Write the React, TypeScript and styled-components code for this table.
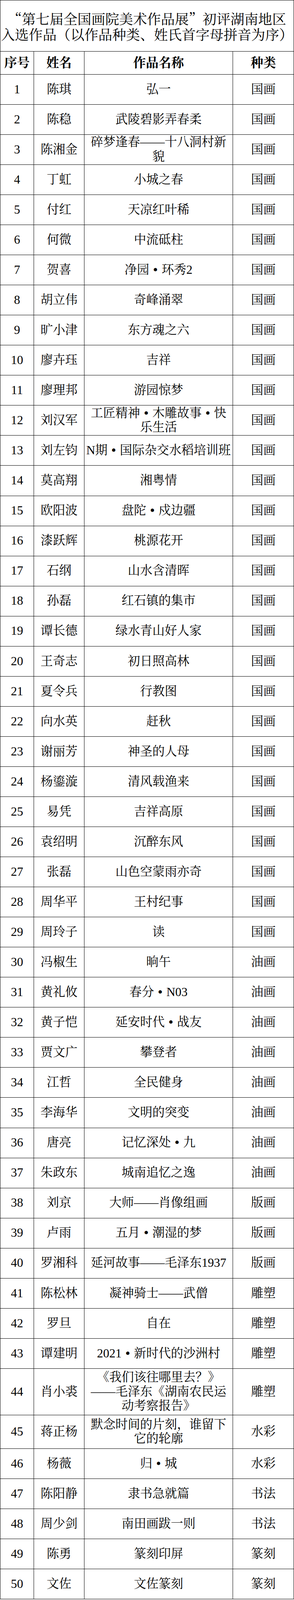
import React from "react";
import styled, { createGlobalStyle } from "styled-components";

// 原表高 4676px，纵向尺寸按窗口高度折算，整张表正好放进一屏
const vy = (px: number) => `calc(100vh * ${px} / 4678)`;

const GlobalStyle = createGlobalStyle`
  html, body {
    margin: 0;
    padding: 0;
    background: #fff;
  }
  body {
    color: #000;
    font-family: "Liberation Serif", "Noto Serif CJK SC", "Noto Sans CJK SC", serif;
  }
`;

const Sheet = styled.div`
  width: 752px;
  box-sizing: border-box;
  border-left: 1px solid #000;
`;

const TitleBox = styled.div`
  height: ${vy(151)};
  box-sizing: border-box;
  border-top: 1px solid #000;
  border-right: 1px solid #000;
  border-bottom: 1px solid #000;
  display: flex;
  align-items: center;
  justify-content: center;
  text-align: center;
  font-family: "Noto Serif CJK SC", "Noto Sans CJK SC", serif;
  font-size: 35.6px;
  line-height: ${vy(46.7)};
  padding-top: ${vy(3)};
`;

const TitleLine = styled.div`
  white-space: nowrap;
`;

const Quote = styled.span<{ $open?: boolean }>`
  display: inline-block;
  width: 1em;
  text-align: ${(p) => (p.$open ? "right" : "left")};
`;

const Row = styled.div<{ $h: number }>`
  display: grid;
  grid-template-columns: 86px 129px 380px 156px;
  height: ${(p) => vy(p.$h)};
`;

const Cell = styled.div<{ $head?: boolean }>`
  box-sizing: border-box;
  border-right: 1px solid #000;
  border-bottom: 1px solid #000;
  display: flex;
  flex-direction: column;
  align-items: center;
  justify-content: center;
  text-align: center;
  padding: 0 2px;
  font-size: ${(p) => (p.$head ? "32.5px" : "31.5px")};
  font-weight: ${(p) => (p.$head ? 700 : 400)};
  line-height: ${vy(41.7)};
`;

const WorkLine = styled.span`
  display: block;
  white-space: nowrap;
`;

const Dot = styled.span`
  display: inline-block;
  width: 31.5px;
  text-align: center;
  font-family: "Liberation Serif", serif;
  font-weight: 700;
`;

type Entry = {
  no: number;
  name: string;
  work: string;
  kind: string;
  h?: number;
};

const entries: Entry[] = [
  { no: 1, name: "陈琪", work: "弘一", kind: "国画" },
  { no: 2, name: "陈稳", work: "武陵碧影弄春柔", kind: "国画" },
  { no: 3, name: "陈湘金", work: "碎梦逢春——十八洞村新\n貌", kind: "国画" },
  { no: 4, name: "丁虹", work: "小城之春", kind: "国画" },
  { no: 5, name: "付红", work: "天凉红叶稀", kind: "国画" },
  { no: 6, name: "何微", work: "中流砥柱", kind: "国画" },
  { no: 7, name: "贺喜", work: "净园·环秀2", kind: "国画" },
  { no: 8, name: "胡立伟", work: "奇峰涌翠", kind: "国画" },
  { no: 9, name: "旷小津", work: "东方魂之六", kind: "国画" },
  { no: 10, name: "廖卉珏", work: "吉祥", kind: "国画" },
  { no: 11, name: "廖理邦", work: "游园惊梦", kind: "国画" },
  { no: 12, name: "刘汉军", work: "工匠精神·木雕故事·快\n乐生活", kind: "国画" },
  { no: 13, name: "刘左钧", work: "N期·国际杂交水稻培训班", kind: "国画" },
  { no: 14, name: "莫高翔", work: "湘粤情", kind: "国画" },
  { no: 15, name: "欧阳波", work: "盘陀·戍边疆", kind: "国画" },
  { no: 16, name: "漆跃辉", work: "桃源花开", kind: "国画" },
  { no: 17, name: "石纲", work: "山水含清晖", kind: "国画" },
  { no: 18, name: "孙磊", work: "红石镇的集市", kind: "国画" },
  { no: 19, name: "谭长德", work: "绿水青山好人家", kind: "国画" },
  { no: 20, name: "王奇志", work: "初日照高林", kind: "国画" },
  { no: 21, name: "夏令兵", work: "行教图", kind: "国画" },
  { no: 22, name: "向水英", work: "赶秋", kind: "国画" },
  { no: 23, name: "谢丽芳", work: "神圣的人母", kind: "国画" },
  { no: 24, name: "杨鎏漩", work: "清风载渔来", kind: "国画" },
  { no: 25, name: "易凭", work: "吉祥高原", kind: "国画" },
  { no: 26, name: "袁绍明", work: "沉醉东风", kind: "国画" },
  { no: 27, name: "张磊", work: "山色空蒙雨亦奇", kind: "国画" },
  { no: 28, name: "周华平", work: "王村纪事", kind: "国画" },
  { no: 29, name: "周玲子", work: "读", kind: "国画" },
  { no: 30, name: "冯椒生", work: "晌午", kind: "油画" },
  { no: 31, name: "黄礼攸", work: "春分·N03", kind: "油画" },
  { no: 32, name: "黄子恺", work: "延安时代·战友", kind: "油画" },
  { no: 33, name: "贾文广", work: "攀登者", kind: "油画" },
  { no: 34, name: "江哲", work: "全民健身", kind: "油画" },
  { no: 35, name: "李海华", work: "文明的突变", kind: "油画" },
  { no: 36, name: "唐亮", work: "记忆深处·九", kind: "油画" },
  { no: 37, name: "朱政东", work: "城南追忆之逸", kind: "油画" },
  { no: 38, name: "刘京", work: "大师——肖像组画", kind: "版画" },
  { no: 39, name: "卢雨", work: "五月·潮湿的梦", kind: "版画" },
  { no: 40, name: "罗湘科", work: "延河故事——毛泽东1937", kind: "版画" },
  { no: 41, name: "陈松林", work: "凝神骑士——武僧", kind: "雕塑" },
  { no: 42, name: "罗旦", work: "自在", kind: "雕塑" },
  { no: 43, name: "谭建明", work: "2021·新时代的沙洲村", kind: "雕塑" },
  {
    no: 44,
    name: "肖小裘",
    work: "《我们该往哪里去？》\n——毛泽东《湖南农民运\n动考察报告》",
    kind: "雕塑",
    h: 136,
  },
  {
    no: 45,
    name: "蒋正杨",
    work: "默念时间的片刻，谁留下\n它的轮廓",
    kind: "水彩",
    h: 98,
  },
  { no: 46, name: "杨薇", work: "归·城", kind: "水彩" },
  { no: 47, name: "陈阳静", work: "隶书急就篇", kind: "书法" },
  { no: 48, name: "周少剑", work: "南田画跋一则", kind: "书法" },
  { no: 49, name: "陈勇", work: "篆刻印屏", kind: "篆刻" },
  { no: 50, name: "文佐", work: "文佐篆刻", kind: "篆刻" },
];

// 按原表的折行分行，间隔号单独占一个字宽
function renderWork(text: string) {
  return text.split("\n").map((line, li) => (
    <WorkLine key={li}>
      {line.split("·").map((part, i) => (
        <React.Fragment key={i}>
          {i > 0 && <Dot>•</Dot>}
          {part}
        </React.Fragment>
      ))}
    </WorkLine>
  ));
}

export default function App() {
  return (
    <>
      <GlobalStyle />
      <Sheet>
        <TitleBox>
          <div>
            <TitleLine>
              <Quote $open>“</Quote>第七届全国画院美术作品展<Quote>”</Quote>初评湖南地区
            </TitleLine>
            <TitleLine>入选作品（以作品种类、姓氏首字母拼音为序）</TitleLine>
          </div>
        </TitleBox>
        <Row $h={67}>
          <Cell $head>序号</Cell>
          <Cell $head>姓名</Cell>
          <Cell $head>作品名称</Cell>
          <Cell $head>种类</Cell>
        </Row>
        {entries.map((item) => (
          <Row key={item.no} $h={item.h ?? 88}>
            <Cell>{item.no}</Cell>
            <Cell>{item.name}</Cell>
            <Cell>{renderWork(item.work)}</Cell>
            <Cell>{item.kind}</Cell>
          </Row>
        ))}
      </Sheet>
    </>
  );
}
